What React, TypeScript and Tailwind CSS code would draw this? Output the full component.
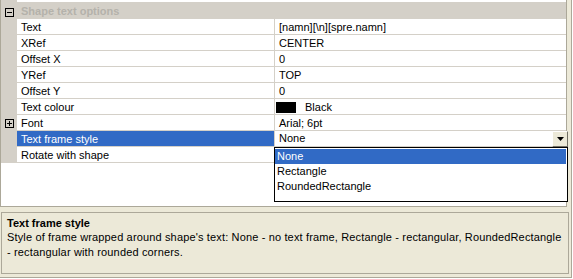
import { ReactNode } from 'react';

interface Row {
  name: string;
  value?: ReactNode;
  expandable?: boolean;
  selected?: boolean;
}

const ROWS: Row[] = [
  { name: 'Text', value: '[namn][\\n][spre.namn]' },
  { name: 'XRef', value: 'CENTER' },
  { name: 'Offset X', value: '0' },
  { name: 'YRef', value: 'TOP' },
  { name: 'Offset Y', value: '0' },
  {
    name: 'Text colour',
    value: (
      <span className="flex items-center">
        <span className="ml-[-3px] mr-[9px] h-[11px] w-[20px] bg-black" />
        Black
      </span>
    ),
  },
  { name: 'Font', value: 'Arial; 6pt', expandable: true },
  { name: 'Text frame style', selected: true },
  { name: 'Rotate with shape', value: '' },
];

const OPTIONS = ['None', 'Rectangle', 'RoundedRectangle'];

function ToggleBox({ open }: { open: boolean }) {
  return (
    <svg width="9" height="9" viewBox="0 0 9 9" className="block">
      <rect x="0.5" y="0.5" width="8" height="8" fill="none" stroke="#000" />
      <line x1="2" y1="4.5" x2="7" y2="4.5" stroke="#000" />
      {!open && <line x1="4.5" y1="2" x2="4.5" y2="7" stroke="#000" />}
    </svg>
  );
}

function ComboValue() {
  return (
    <div className="flex h-full items-center justify-between">
      <span className="pl-[4px]">None</span>
      <span className="mr-[-2px] flex h-[16px] w-[16px] items-center justify-center border border-b-[#716f64] border-l-white border-r-[#716f64] border-t-white bg-[#ece9d8]">
        <svg width="7" height="4" viewBox="0 0 7 4">
          <path d="M0 0h7L3.5 4z" fill="#000" />
        </svg>
      </span>
    </div>
  );
}

export default function App() {
  return (
    <div className="flex h-[278px] w-[572px] flex-col border-b border-r border-[#aca899] bg-[#ece9d8] font-['Liberation_Sans',Arial,sans-serif] text-[11px] leading-[15px] text-black">
      <div className="relative h-[207px] w-[567px] shrink-0 border-b border-l border-r border-[#aca899] bg-white">
        <div className="flex h-[3px]">
          <div className="w-[16px] bg-[#d4d0c8]" />
          <div className="flex-1 border-b border-[#d4d0c8] bg-white" />
        </div>
        <div className="flex h-[16px] bg-[#d4d0c8]">
          <div className="flex w-[16px] items-center justify-center pt-[3px]">
            <ToggleBox open />
          </div>
          <div className="pl-[4px] font-bold leading-[16px] text-[#b4b2ab]">
            Shape text options
          </div>
        </div>
        {ROWS.map((row) => (
          <div key={row.name} className="flex h-[16px]">
            <div className="flex w-[16px] items-center justify-center bg-[#d4d0c8]">
              {row.expandable && <ToggleBox open={false} />}
            </div>
            <div
              className={
                row.selected
                  ? 'w-[258px] border-b border-r border-[#d4d0c8] bg-[#316ac5] pl-[4px] pt-[1px] text-white'
                  : 'w-[258px] border-b border-r border-[#d4d0c8] pl-[4px] pt-[1px]'
              }
            >
              {row.name}
            </div>
            <div className="flex-1 border-b border-[#d4d0c8]">
              {row.selected ? (
                <ComboValue />
              ) : (
                <div className="pl-[4px] pt-[1px]">{row.value}</div>
              )}
            </div>
          </div>
        ))}

        <div className="absolute left-[273px] top-[147px] h-[55px] w-[294px] border border-black bg-white py-[1px] pr-[1px]">
          {OPTIONS.map((opt, i) => (
            <div
              key={opt}
              className={
                i === 0
                  ? 'h-[15px] bg-[#316ac5] pl-[2px] text-white'
                  : 'h-[15px] pl-[2px]'
              }
            >
              {opt}
            </div>
          ))}
        </div>
      </div>

      <div className="ml-[1px] mt-[5px] h-[62px] w-[568px] border border-[#aca899] px-[5px] pt-[3px]">
        <div className="font-bold leading-[14px]">Text frame style</div>
        <div className="whitespace-nowrap tracking-[0.15px]">
          Style of frame wrapped around shape's text: None - no text frame,
          Rectangle - rectangular, RoundedRectangle
        </div>
        <div className="tracking-[0.15px]">
          - rectangular with rounded corners.
        </div>
      </div>
    </div>
  );
}
